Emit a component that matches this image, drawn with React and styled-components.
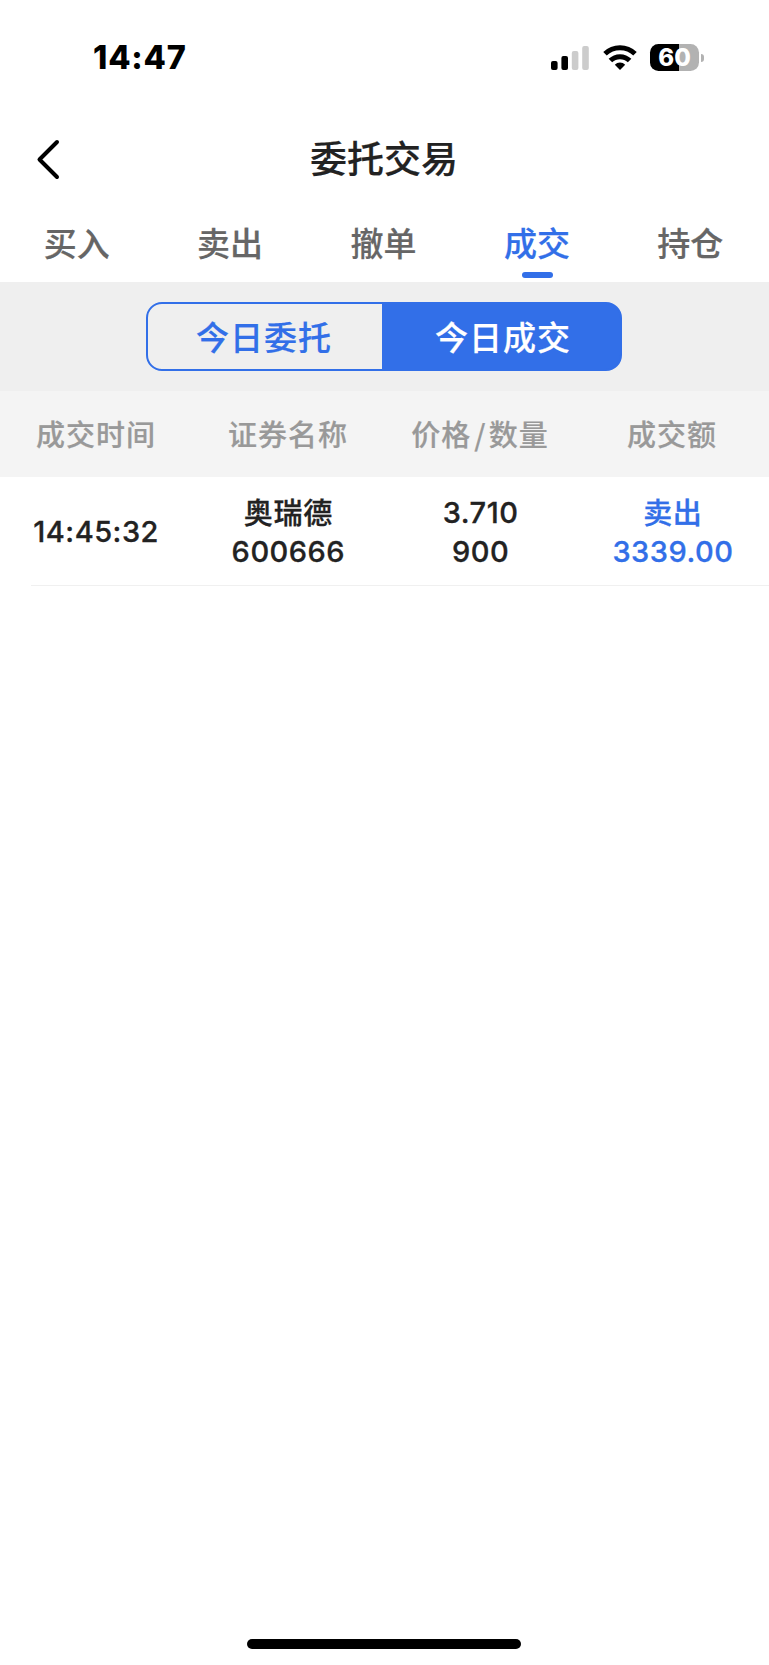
import React from "react";
import styled, { createGlobalStyle } from "styled-components";

const GlobalStyle = createGlobalStyle`
    body {
        margin: 0;
        background: #fff;
        font-family: Inter, "Noto Sans CJK SC", sans-serif;
        color: #222;
    }
`;

const Page = styled.div`
    width: 100%;
    height: 1665px;
    display: flex;
    flex-direction: column;
    overflow: hidden;
    background: #fff;
`;

const StatusBar = styled.header`
    height: 115px;
    padding: 0 65px 0 93px;
    display: flex;
    align-items: center;
    justify-content: space-between;
    box-sizing: border-box;
`;

const Clock = styled.div`
    padding-top: 1px;
    color: #000;
    font-size: 32.5px;
    font-weight: 800;
    letter-spacing: 0.8px;
    line-height: 40px;
`;

const StatusIcons = styled.div`
    display: flex;
    align-items: center;
`;

const SignalIcon = styled.svg`
    width: 38px;
    height: 24px;
    margin-right: 14px;
`;

const WifiIcon = styled.svg`
    width: 34px;
    height: 25px;
    margin-right: 13px;
`;

const Battery = styled.div`
    width: 49px;
    height: 27px;
    border-radius: 8.5px;
    background: linear-gradient(to right, #000 60%, #b2b2b2 60%);
    color: #fff;
    font-size: 24px;
    font-weight: 800;
    line-height: 28px;
    text-align: center;
`;

const BatteryTip = styled.div`
    width: 3px;
    height: 8px;
    margin-left: 2px;
    border-radius: 0 4px 4px 0;
    background: #b2b2b2;
`;

const NavBar = styled.div`
    height: 88px;
    padding: 0 36px 0 35px;
    display: grid;
    grid-template-columns: 40px 1fr 40px;
    align-items: center;
`;

const BackButton = styled.button`
    width: 26px;
    height: 42px;
    padding: 0;
    border: 0;
    background: none;
`;

const Title = styled.h1`
    margin: 0;
    padding-top: 2px;
    font-size: 37px;
    font-weight: 500;
    line-height: 48px;
    text-align: center;
    -webkit-text-stroke: 0.2px currentColor;
`;

const Tabs = styled.nav`
    height: 79px;
    margin-right: 2px;
    display: grid;
    grid-template-columns: repeat(5, 1fr);
`;

const Tab = styled.div`
    padding-top: 19px;
    display: flex;
    flex-direction: column;
    align-items: center;
    color: ${(props) => (props.$active ? "#326fe8" : "#666")};
    font-size: 33px;
    font-weight: 500;
    line-height: 44px;
    -webkit-text-stroke: 0.2px currentColor;

    &::after {
        content: "";
        width: 31px;
        height: 6px;
        margin: 6px 0 0 1px;
        border-radius: 3px;
        background: ${(props) => (props.$active ? "#326fe8" : "transparent")};
    }
`;

const SwitchArea = styled.div`
    height: 109px;
    padding-right: 1px;
    display: flex;
    align-items: center;
    justify-content: center;
    background: #efefef;
`;

const Switch = styled.div`
    width: 476px;
    height: 69px;
    display: flex;
    box-sizing: border-box;
    border: 2px solid #326fe8;
    border-radius: 16px;
    background: linear-gradient(to right, transparent 236px, #326fe8 236px) border-box;
    overflow: hidden;
`;

const SwitchItem = styled.div`
    width: ${(props) => (props.$active ? "240px" : "232px")};
    padding-left: ${(props) => (props.$active ? "6px" : "0")};
    box-sizing: border-box;
    color: ${(props) => (props.$active ? "#fff" : "#326fe8")};
    font-size: 33px;
    font-weight: 500;
    letter-spacing: 1px;
    line-height: 68px;
    text-align: center;
    -webkit-text-stroke: 0.2px currentColor;
`;

const TableRow = styled.div`
    display: grid;
    grid-template-columns: repeat(4, 1fr);
    align-items: center;
    text-align: center;
`;

const TableHead = styled(TableRow)`
    height: 86px;
    padding: 3px 1px 0 0;
    box-sizing: border-box;
    background: #f4f4f4;
    color: #999;
    font-size: 29px;
    font-weight: 500;
    letter-spacing: 1px;
    line-height: 40px;
    -webkit-text-stroke: 0.2px currentColor;
`;

const Slash = styled.span`
    margin: 0 2px 0 3px;
    font-family: "Noto Sans CJK SC", sans-serif;
    line-height: 1;
`;

const Deal = styled(TableRow)`
    height: 108px;
    padding: 2px 0 0;
    box-sizing: border-box;
    font-size: 29px;
    font-weight: 500;
`;

const Cell = styled.div`
    display: flex;
    flex-direction: column;
    color: ${(props) => (props.$sell ? "#326fe8" : "#222")};
`;

const Name = styled.span`
    height: 38.5px;
    padding-top: 1px;
    line-height: 39.5px;
    letter-spacing: 0.7px;
    -webkit-text-stroke: 0.3px currentColor;
`;

const Value = styled.span`
    line-height: 39.5px;
    letter-spacing: 0.5px;
    -webkit-text-stroke: 0.3px currentColor;
`;

const Divider = styled.div`
    height: 1px;
    margin-left: 31px;
    background: #f0f0f0;
`;

const HomeBar = styled.div`
    width: 274px;
    height: 10px;
    margin: auto 248px 16px 247px;
    border-radius: 5px;
    background: #000;
`;

const tabs = ["买入", "卖出", "撤单", "成交", "持仓"];
const deals = [
    { time: "14:45:32", name: "奥瑞德", code: "600666", price: "3.710", count: "900", side: "卖出", amount: "3339.00" },
];

const App = () => {
    return (
        <Page>
            <GlobalStyle />
            <StatusBar>
                <Clock>14:47</Clock>
                <StatusIcons>
                    <SignalIcon viewBox="0 0 38 24">
                        <rect x="0" y="15" width="6.6" height="9" rx="2" />
                        <rect x="10.4" y="10" width="6.6" height="14" rx="2" />
                        <rect x="20.8" y="5" width="6.6" height="19" rx="2" fill="#ccc" />
                        <rect x="31.2" y="0" width="6.6" height="24" rx="2" fill="#ccc" />
                    </SignalIcon>
                    <WifiIcon viewBox="0 0 34 25" fill="none" stroke="#000" strokeWidth="5">
                        <path d="M2 8.8a21.5 21.5 0 0 1 30 0" />
                        <path d="M7.4 15.6a13.6 13.6 0 0 1 19.2 0" />
                        <path d="M17 25l-5.2-5.3a7.4 7.4 0 0 1 10.4 0z" fill="#000" stroke="none" />
                    </WifiIcon>
                    <Battery>60</Battery>
                    <BatteryTip />
                </StatusIcons>
            </StatusBar>
            <NavBar>
                <BackButton aria-label="返回">
                    <svg width="26" height="42" viewBox="0 0 26 42" fill="none" stroke="#000" strokeWidth="4" strokeLinecap="round" strokeLinejoin="round">
                        <path d="M22 4L4.5 21.5L22 39" />
                    </svg>
                </BackButton>
                <Title>委托交易</Title>
            </NavBar>
            <Tabs>
                {tabs.map((tab) => (
                    <Tab key={tab} $active={tab === "成交"}>{tab}</Tab>
                ))}
            </Tabs>
            <SwitchArea>
                <Switch>
                    <SwitchItem>今日委托</SwitchItem>
                    <SwitchItem $active>今日成交</SwitchItem>
                </Switch>
            </SwitchArea>
            <TableHead>
                <div>成交时间</div>
                <div>证券名称</div>
                <div>价格<Slash>/</Slash>数量</div>
                <div>成交额</div>
            </TableHead>
            {deals.map((deal) => (
                <React.Fragment key={deal.time}>
                    <Deal>
                        <Cell><Value>{deal.time}</Value></Cell>
                        <Cell>
                            <Name>{deal.name}</Name>
                            <Value>{deal.code}</Value>
                        </Cell>
                        <Cell>
                            <Value>{deal.price}</Value>
                            <Value>{deal.count}</Value>
                        </Cell>
                        <Cell $sell>
                            <Name>{deal.side}</Name>
                            <Value>{deal.amount}</Value>
                        </Cell>
                    </Deal>
                    <Divider />
                </React.Fragment>
            ))}
            <HomeBar />
        </Page>
    );
};

export default App;
